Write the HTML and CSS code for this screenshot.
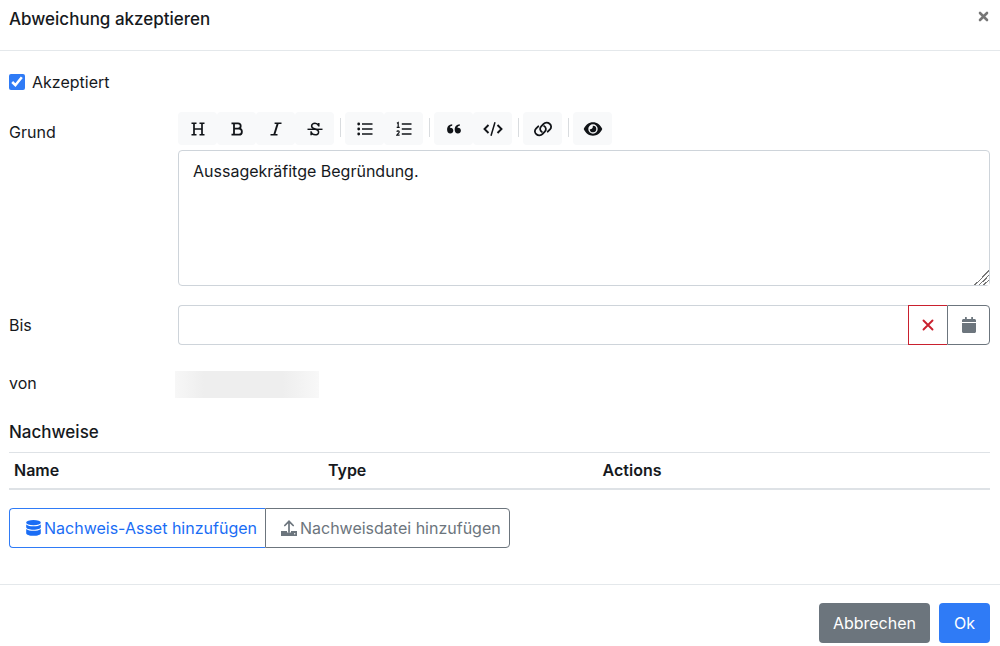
FILE: index.html
```html
<!DOCTYPE html>
<html lang="de">
<head>
<meta charset="utf-8">
<meta name="viewport" content="width=device-width, initial-scale=1">
<title>Abweichung akzeptieren</title>
<link rel="stylesheet" href="styles.css">
</head>
<body>
<form class="dialog">
  <header class="dialog-header">
    <h1 class="title">Abweichung akzeptieren</h1>
    <button type="button" class="close" aria-label="Schließen">
      <svg width="11" height="11" viewBox="0 0 11 11"><path d="M2 2l7 7M9 2l-7 7" stroke="#777" stroke-width="2.6" stroke-linecap="round"/></svg>
    </button>
  </header>

  <main class="dialog-body">
    <div class="check">
      <input type="checkbox" id="accepted" checked>
      <label for="accepted">Akzeptiert</label>
    </div>

    <div class="row row-reason">
      <label for="reason">Grund</label>
      <div class="editor">
        <div class="toolbar" role="toolbar" aria-label="Formatierung">
          <div class="tools">
            <button type="button" class="tool" aria-label="Überschrift"><svg viewBox="0 0 16 16"><path d="M4 2.200v11.600M12 2.200v11.600M4 8h8" stroke-width="1.700"/><path d="M1.500 2.200h5M9.500 2.200h5M1.500 13.800h5M9.500 13.800h5" stroke-width="1.400"/></svg></button>
            <button type="button" class="tool" aria-label="Fett"><svg viewBox="0 0 16 16"><path d="M2.500 2.300H9a2.700 2.700 0 0 1 0 5.400H5M5 7.700h4.900a3 3 0 0 1 0 6H2.500M5 2.300v11.400" stroke-width="1.800"/></svg></button>
            <button type="button" class="tool" aria-label="Kursiv"><svg viewBox="0 0 16 16"><path d="M9.800 2.200l-3.600 11.600" stroke-width="1.900"/><path d="M6.600 2.200H13.500M2.500 13.800h7" stroke-width="1.500"/></svg></button>
            <button type="button" class="tool" aria-label="Durchgestrichen"><svg viewBox="0 0 16 16"><path d="M11.800 5.600V2M11.600 4.600C10.800 3 9.500 2.300 8 2.300c-2 0-3.400 1-3.400 2.600C4.600 6.700 6 7.400 8 8s3.600 1.200 3.600 2.900-1.400 2.900-3.500 2.900c-1.800 0-3.300-.8-3.900-2.500M4.100 10.300v3.900" stroke-width="1.500"/><path d="M.5 8.300h15" stroke-width="1.400"/></svg></button>
          </div>
          <div class="tools">
            <button type="button" class="tool" aria-label="Liste"><svg viewBox="0 0 16 16"><path d="M5 3h10.500M5 8h10.500M5 13h10.500" stroke-width="1.700"/><g class="solid"><circle cx="1.700" cy="3" r="1.400"/><circle cx="1.700" cy="8" r="1.400"/><circle cx="1.700" cy="13" r="1.400"/></g></svg></button>
            <button type="button" class="tool" aria-label="Nummerierte Liste"><svg viewBox="0 0 16 16"><path d="M5.800 3h9.700M5.800 8h9.700M5.800 13h9.700" stroke-width="1.700"/><path d="M.9 2.200l1.300-.7v4.800M.7 6.300h3M.8 10.700c.4-1.300 2.500-1.100 2.400.2 0 .9-1.200 1.700-2.300 3.200h2.700" stroke-width="1.200"/></svg></button>
          </div>
          <div class="tools">
            <button type="button" class="tool" aria-label="Zitat"><svg viewBox="0 0 16 16"><g class="solid"><path id="quote" d="M6.200 3.300v1.500C4.900 4.900 4 5.600 3.800 6.800c2.100-.3 3.500.9 3.500 2.800 0 1.800-1.300 3-3 3-2 0-3.200-1.400-3.200-3.800 0-3.300 1.900-5.400 5.100-5.500z"/><use href="#quote" x="7.600"/></g></svg></button>
            <button type="button" class="tool" aria-label="Code"><svg class="wide" viewBox="0 0 20 16"><path d="M5.500 4L1.500 8l4 4M14.500 4l4 4-4 4" stroke-width="1.900"/><path d="M12 1.200L8 14.800" stroke-width="1.500"/></svg></button>
          </div>
          <div class="tools">
            <button type="button" class="tool" aria-label="Link"><svg class="wide" viewBox="0 0 20 16"><path d="M8.900 10.900C6.800 9.600 6.500 7 8.200 5.300l2.400-2.400c1.500-1.500 4.300-1.600 6-.2 1.900 1.600 2 4 .4 5.700l-2.300 2.300M11.100 5.100c2.100 1.300 2.400 3.900.7 5.600l-2.400 2.400c-1.500 1.500-4.300 1.600-6 .2-1.900-1.600-2-4-.4-5.700l2.300-2.300" stroke-width="1.800" stroke-linecap="round"/></svg></button>
          </div>
          <div class="tools">
            <button type="button" class="tool" aria-label="Vorschau"><svg class="wide" viewBox="0 0 20 16"><path class="solid" fill-rule="evenodd" d="M.7 8C2.600 3.900 5.900 1.300 10 1.300S17.400 3.900 19.300 8c-1.900 4.100-5.200 6.700-9.300 6.700S2.600 12.100.7 8zM10 3.300a4.700 4.700 0 1 0 0 9.400 4.700 4.700 0 0 0 0-9.400z"/><path class="solid" d="M9.800 4.700a3.300 3.300 0 1 1-3.100 3.500c1.900.4 3.500-1.300 3.100-3.500z"/></svg></button>
          </div>
        </div>
        <textarea class="field area" id="reason">Aussagekräfitge Begründung.</textarea>
      </div>
    </div>

    <div class="row row-until">
      <label for="until">Bis</label>
      <div class="input-group">
        <input type="text" class="field until" id="until">
        <button type="button" class="addon clear" aria-label="Datum löschen"><svg width="12" height="12" viewBox="0 0 12 12"><path d="M1.500 1.500l9 9M10.500 1.500l-9 9" stroke="currentColor" stroke-width="1.900" stroke-linecap="round"/></svg></button>
        <button type="button" class="addon calendar" aria-label="Kalender öffnen"><svg class="filled" width="14" height="16" viewBox="0 0 14 16"><path d="M0 5V3.500C0 2.700.7 2 1.500 2H3V.6a.9.9 0 0 1 1.800 0V2h4.400V.6a.9.9 0 0 1 1.800 0V2h1.500c.8 0 1.500.7 1.500 1.500V5zM0 6h14v8.500c0 .8-.7 1.500-1.500 1.500h-11C.7 16 0 15.300 0 14.500z"/></svg></button>
      </div>
    </div>

    <div class="row row-from">
      <span>von</span>
      <div class="redacted"></div>
    </div>

    <h2 class="title">Nachweise</h2>
    <table class="evidence">
      <thead><tr><th class="col-name">Name</th><th class="col-type">Type</th><th>Actions</th></tr></thead>
    </table>

    <div class="actions">
      <button type="button" class="btn add-asset"><svg class="filled" width="15" height="16" viewBox="0 0 15 16"><ellipse cx="7.500" cy="2.700" rx="7.300" ry="2.600"/><path d="M.2 4.500c1.500 1.300 4 1.800 7.300 1.800s5.800-.5 7.300-1.800v2.700c0 1.400-3.300 2.500-7.300 2.500S.2 8.600.2 7.200z"/><path d="M.2 9c1.500 1.300 4 1.800 7.300 1.800s5.800-.5 7.300-1.800v4.200c0 1.500-3.300 2.600-7.300 2.600S.2 14.700.2 13.200z"/></svg><span>Nachweis-Asset hinzufügen</span></button>
      <button type="button" class="btn add-file"><svg width="16" height="16" viewBox="0 0 16 16" stroke="currentColor"><path d="M8 12V1.500M3.800 5.500L8 1.300l4.200 4.200" stroke-width="1.700" stroke-linecap="round"/><path d="M0 11h6v1.500h4V11h6v5H0z" fill="currentColor" stroke="none"/><circle cx="13.700" cy="13.700" r=".7" fill="#fff" stroke="none"/></svg><span>Nachweisdatei hinzufügen</span></button>
    </div>
  </main>

  <footer class="dialog-footer">
    <button type="button" class="btn cancel">Abbrechen</button>
    <button type="submit" class="btn ok">Ok</button>
  </footer>
</form>
</body>
</html>
```
FILE: styles.css
```css
* { box-sizing: border-box; }
body {
  margin: 0;
  background: #fff;
  color: #16191d;
  font: 16px/24px Inter, "Liberation Sans", sans-serif;
}
button, input, textarea { font: inherit; color: inherit; }
button { padding: 0; cursor: pointer; }
svg { display: block; fill: none; flex: none; }
.filled { fill: currentColor; }

.dialog-header {
  display: flex;
  justify-content: space-between;
  align-items: flex-start;
  padding: 7px 10px 19px 9px;
  border-bottom: 1px solid #e4e8eb;
}
.title { margin: 0; font-size: 17px; line-height: 24px; font-weight: 500; }
.close { padding: 4px 1px; border: 0; background: none; }

.dialog-body { padding: 19px 10px 36px 9px; }
.check { display: flex; align-items: center; gap: 7px; }
.check input { width: 16px; height: 16px; margin: 0; accent-color: #2f7bf6; }

.row { display: grid; grid-template-columns: 169px 1fr; }
.row-reason { margin-top: 18px; }
.row-reason > label { padding-top: 8px; }
.toolbar { display: flex; height: 33px; }
.tools { display: flex; }
.tools + .tools { margin-left: 6px; padding-left: 5px; position: relative; }
.tools + .tools::before {
  content: "";
  position: absolute;
  left: 0;
  top: 6px;
  height: 19px;
  border-left: 1px solid #d9dcdf;
}
.tool {
  display: flex;
  align-items: center;
  justify-content: center;
  width: 39px;
  border: 0;
  border-radius: 4px;
  background: #f8f9fa;
}
.tool svg { width: 16px; height: 16px; stroke: #111418; }
.tool svg.wide { width: 20px; height: 16px; }
.tool svg .solid { fill: #111418; stroke: none; }

.field {
  border: 1px solid #ced4da;
  border-radius: 4px;
  background: #fff;
  outline: 0;
}
.area {
  display: block;
  width: 100%;
  height: 136px;
  margin-top: 5px;
  padding: 8px 14px;
  resize: vertical;
}
.area::-webkit-resizer {
  background: linear-gradient(135deg, #fff 50%, #777 50% 55%, #fff 55% 65%, #777 65% 70%, #fff 70% 80%, #777 80% 85%, #fff 85%);
}
.row-until { margin-top: 19px; align-items: center; }
.input-group { display: flex; height: 40px; }
.until { flex: 1; min-width: 0; padding: 8px 14px; border-right: 0; border-radius: 4px 0 0 4px; }
.addon {
  display: flex;
  align-items: center;
  justify-content: center;
  border: 1px solid;
  background: #fff;
}
.clear { width: 39px; border-right: 0; color: #c9202e; }
.calendar { width: 43px; border-radius: 0 4px 4px 0; color: #6c757d; }

.row-from { margin-top: 26px; line-height: 25px; }
.redacted {
  width: 144px;
  height: 27px;
  margin-left: -3px;
  background: linear-gradient(90deg, #f7f7f7, #eee 20%, #eee 75%, #f8f8f8);
}

h2.title { margin-top: 22px; }
.evidence { width: 100%; margin-top: 8px; border-collapse: collapse; }
.evidence th {
  padding: 5px 5px 6px;
  border-top: 1px solid #dee2e6;
  border-bottom: 2px solid #dee2e6;
  text-align: left;
  font-weight: 600;
}
.col-name { width: 32%; }
.col-type { width: 28%; }

.actions { display: flex; margin-top: 18px; }
.btn {
  display: flex;
  align-items: center;
  height: 40px;
  padding: 0 14px;
  border: 1px solid;
  border-radius: 4px;
  background: #fff;
}
.actions .btn { gap: 3px; }
.add-asset { padding: 0 8px 0 16px; border-right: 0; border-radius: 4px 0 0 4px; color: #1a6df5; border-color: #2f7bf6; }
.add-file { padding: 0 8px 0 15px; border-radius: 0 4px 4px 0; color: #6c757d; }

.dialog-footer {
  display: flex;
  justify-content: flex-end;
  gap: 9px;
  padding: 18px 10px 3px;
  border-top: 1px solid #e4e8eb;
}
.cancel, .ok { color: #fff; border-color: transparent; }
.cancel { padding: 0 13px; background: #6c757d; }
.ok { background: #2f7bf6; }
```
